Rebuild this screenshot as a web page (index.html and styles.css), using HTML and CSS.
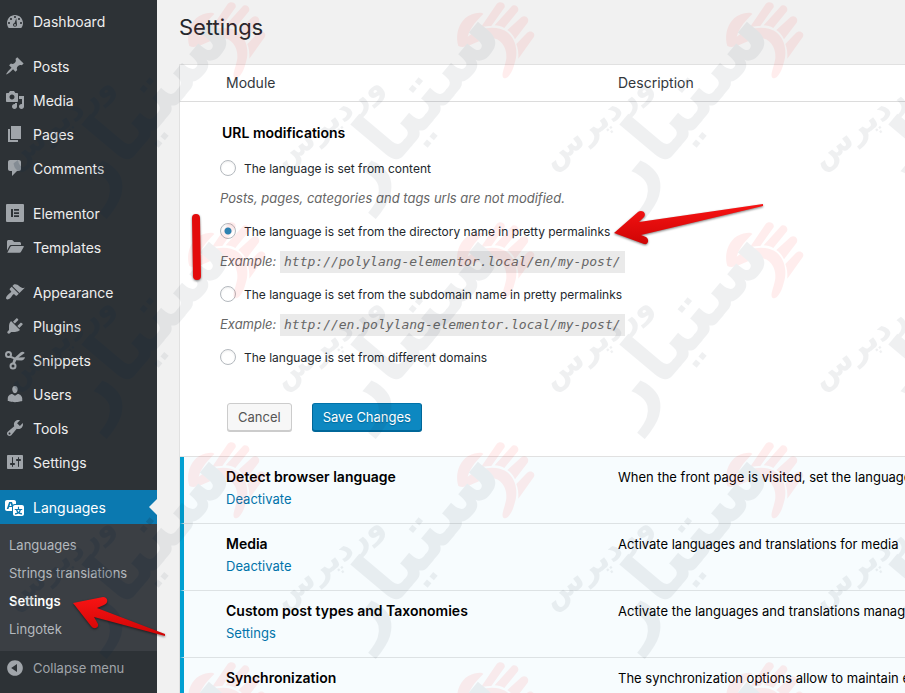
FILE: index.html
```
<!DOCTYPE html>
<html lang="en">
<head>
    <meta charset="UTF-8">
    <title>Settings - Languages</title>
    <meta name="viewport" content="width=device-width, initial-scale=1">
    <link rel="stylesheet" href="styles.css">
</head>
<body>
    <div class="wrapper">
        <nav class="sidebar">
            <ul class="menu">
                <li><a href="#"><svg viewBox="0 0 20 20"><path d="M3.76 17h12.48c1.1-1.37 1.76-3.11 1.76-5 0-4.42-3.58-8-8-8s-8 3.58-8 8c0 1.89.66 3.63 1.76 5zM9 6c0-.55.45-1 1-1s1 .45 1 1c0 .56-.45 1-1 1s-1-.44-1-1zM5 8c0-.55.45-1 1-1s1 .45 1 1c0 .56-.45 1-1 1s-1-.44-1-1zM13 8c0-.55.45-1 1-1s1 .45 1 1c0 .56-.45 1-1 1s-1-.44-1-1zM3 12c0-.55.45-1 1-1s1 .45 1 1c0 .56-.45 1-1 1s-1-.44-1-1zM15 12c0-.55.45-1 1-1s1 .45 1 1c0 .56-.45 1-1 1s-1-.44-1-1zM11.3 7.3L12 13.8c0 1.1-.9 2-2 2s-2-.9-2-2c0-1 .7-1.700 1.500-1.900zM10 13a.9.9 0 1 0 0 1.800.9.9 0 0 0 0-1.800z" fill-rule="evenodd"/></svg>Dashboard</a></li>
                <li class="gap"><a href="#"><svg viewBox="0 0 20 20"><path d="M10.44 3.02l1.82-1.82 6.36 6.35-1.83 1.82c-1.05-.68-2.48-.57-3.41.36l-.75.75c-.92.93-1.04 2.35-.35 3.41l-1.83 1.82-2.41-2.41-2.8 2.79c-.42.42-3.38 2.71-3.8 2.29s1.86-3.39 2.28-3.81l2.79-2.79L4.1 9.36l1.83-1.82c1.05.69 2.48.57 3.4-.36l.75-.75c.93-.92 1.05-2.35.36-3.41z"/></svg>Posts</a></li>
                <li><a href="#"><svg viewBox="0 0 20 20"><path fill-rule="evenodd" d="M13 11V4c0-.55-.45-1-1-1h-1.670L9 1H5L3.670 3H2c-.55 0-1 .45-1 1v7c0 .55.45 1 1 1h10c.55 0 1-.45 1-1zM7 4.500c1.380 0 2.500 1.120 2.500 2.500S8.380 9.500 7 9.500 4.500 8.380 4.500 7 5.620 4.500 7 4.500zM14 6h5v10.500c0 1.380-1.120 2.500-2.500 2.500S14 17.880 14 16.500s1.120-2.500 2.500-2.500c.17 0 .34.02.5.05V9h-3V6zm-4 8.050V13h2v3.500c0 1.380-1.120 2.500-2.500 2.500S7 17.880 7 16.500 8.120 14 9.500 14c.17 0 .34.02.5.05z"/></svg>Media</a></li>
                <li><a href="#"><svg viewBox="0 0 20 20"><path d="M6 15V2h10v13H6zm-1 1h8v2H3V5h2v11z"/></svg>Pages</a></li>
                <li><a href="#"><svg viewBox="0 0 20 20"><path d="M5 2h9c1.1 0 2 .9 2 2v7c0 1.100-.9 2-2 2h-2l-5 5v-5H5c-1.100 0-2-.9-2-2V4c0-1.100.9-2 2-2z"/></svg>Comments</a></li>
                <li class="gap"><a href="#"><svg viewBox="0 0 20 20"><path fill-rule="evenodd" d="M2 1h16a1 1 0 0 1 1 1v16a1 1 0 0 1-1 1H2a1 1 0 0 1-1-1V2a1 1 0 0 1 1-1zM6 6v8h2V6zM9 6v1.700h5V6zM9 9.200v1.700h5V9.200zM9 12.300V14h5v-1.700z"/></svg>Elementor</a></li>
                <li><a href="#"><svg viewBox="0 0 20 20"><path d="M2 13.500V4.500C2 3.700 2.700 3 3.500 3h3.700l2 2h5.300c.8 0 1.500.7 1.500 1.500V8H6.500c-1 0-1.800.5-2.200 1.200zM2.300 15.800l3-5.800c.3-.6.8-1 1.500-1h11.400c.5 0 .8.5.5 1l-2.800 5c-.3.500-.8.8-1.400.8z"/></svg>Templates</a></li>
                <li class="gap"><a href="#"><svg viewBox="0 0 20 20"><path d="M14.480 11.060L7.410 3.990l1.500-1.500c.5-.56 2.300-.47 3.510.32 1.210.8 1.430 1.280 2.910 2.100 1.180.64 2.450 1.260 4.450.85zm-.71.71L6.700 4.700 4.930 6.470c-.39.39-.39 1.020 0 1.410l1.060 1.060c.39.39.39 1.030 0 1.420-.6.6-1.430 1.110-2.210 1.690-.35.26-.7.53-1.010.84C1.430 14.230.4 16.080 1.400 17.070c.99 1 2.840-.03 4.180-1.360.31-.31.58-.66.85-1.020.57-.78 1.080-1.610 1.690-2.210.39-.39 1.020-.39 1.410 0l1.060 1.060c.39.39 1.020.39 1.410 0z"/></svg>Appearance</a></li>
                <li><a href="#"><svg viewBox="0 0 20 20"><path d="M13.110 4.360L9.870 7.600 8 5.730l3.240-3.240c.35-.34 1.050-.2 1.560.32.52.51.66 1.210.31 1.550zm-8 1.770l.91-1.120 9.010 9.010-1.190.84c-.71.71-2.630 1.160-3.820 1.160H6.140L4.900 17.260c-.59.59-1.540.59-2.120 0-.59-.58-.59-1.530 0-2.120l1.240-1.240v-3.880c0-1.130.4-3.190 1.090-3.890zm7.260 3.970l3.240-3.240c.34-.35 1.040-.21 1.550.31.52.51.66 1.210.31 1.550l-3.240 3.250z"/></svg>Plugins</a></li>
                <li><a href="#"><svg viewBox="0 0 20 20"><g fill="none" stroke="currentColor" stroke-width="2"><circle cx="3.500" cy="4.500" r="2.500"/><circle cx="8" cy="16" r="2.500"/></g><path d="M5 5.500l5 2 5.500-5c1.500-1.200 3.300-1 4.200.4l-6.200 4.600 6.500-.2c-.3 2-1.800 3.200-3.700 3.200l-5-.2-1.800 4-2.300-.8 1.300-4.400-4.300-1.700z"/></svg>Snippets</a></li>
                <li><a href="#"><svg viewBox="0 0 20 20"><path d="M10 9.250c-2.270 0-2.730-3.440-2.730-3.440C7 4.020 7.820 2 9.970 2c2.160 0 2.980 2.020 2.710 3.810 0 0-.41 3.440-2.680 3.440zm0 2.570L12.720 10c2.390 0 4.520 2.330 4.520 4.530v2.490s-3.650 1.130-7.240 1.130c-3.650 0-7.240-1.130-7.240-1.130v-2.490c0-2.250 1.940-4.480 4.470-4.480z"/></svg>Users</a></li>
                <li><a href="#"><svg viewBox="0 0 20 20"><path fill-rule="evenodd" d="M16.680 9.770c-1.340 1.340-3.300 1.670-4.950.99l-5.410 6.520c-.99.99-2.590.99-3.580 0s-.99-2.590 0-3.570l6.520-5.420c-.68-1.650-.35-3.610.99-4.950 1.280-1.280 3.120-1.620 4.720-1.060l-2.890 2.890 2.820 2.820 2.860-2.870c.53 1.580.18 3.390-1.080 4.650zM3.810 16.210c.4.39 1.040.39 1.430 0 .4-.4.4-1.040 0-1.430-.39-.4-1.030-.4-1.430 0-.39.39-.39 1.030 0 1.430z"/></svg>Tools</a></li>
                <li><a href="#"><svg viewBox="0 0 20 20"><path fill-rule="evenodd" d="M18 16V4c0-.55-.45-1-1-1H3c-.55 0-1 .45-1 1v12c0 .55.45 1 1 1h14c.55 0 1-.45 1-1zM8 11h1c.55 0 1 .45 1 1s-.45 1-1 1H8v1.500c0 .28-.22.5-.5.5s-.5-.22-.5-.5V13H6c-.55 0-1-.45-1-1s.45-1 1-1h1V5.500c0-.28.22-.5.5-.5s.5.22.5.5V11zm5-2h-1c-.55 0-1-.45-1-1s.45-1 1-1h1V5.500c0-.28.22-.5.5-.5s.5.22.5.5V7h1c.55 0 1 .45 1 1s-.45 1-1 1h-1v5.500c0 .28-.22.5-.5.5s-.5-.22-.5-.5V9z"/></svg>Settings</a></li>
                <li class="gap current"><a href="#"><svg viewBox="0 0 20 20"><path fill-rule="evenodd" d="M11 7H9.490c-.63 0-1.250.3-1.590.7L7 5H4.130l-2.390 7h1.690l.74-2H7v4H2c-1.100 0-2-.9-2-2V5c0-1.100.9-2 2-2h7c1.100 0 2 .9 2 2v2zM6.510 9H4.490l1-2.930zM10 8h7c1.100 0 2 .9 2 2v7c0 1.100-.9 2-2 2h-7c-1.100 0-2-.9-2-2v-7c0-1.100.9-2 2-2zm7.250 5v-1.080h-3.170V9.750h-1.160v2.170H9.750V13h1.280c.11.85.56 1.850 1.280 2.620-.87.36-1.890.62-2.310.62-.01.02.22.97.2 1.460.84 0 2.210-.5 3.280-1.150 1.090.65 2.480 1.150 3.340 1.150-.02-.49.2-1.440.2-1.460-.43 0-1.490-.27-2.380-.63.7-.77 1.140-1.770 1.250-2.610h1.360zm-3.810 1.930c-.5-.46-.85-1.130-1.010-1.930h2.090c-.17.8-.51 1.470-1 1.930l-.04.03s-.03-.02-.04-.03z"/></svg>Languages</a></li>
            </ul>
            <ul class="submenu">
                <li><a href="#">Languages</a></li>
                <li><a href="#">Strings translations</a></li>
                <li><a href="#" class="active">Settings</a></li>
                <li><a href="#">Lingotek</a></li>
            </ul>
            <button type="button" class="collapse"><svg viewBox="0 0 20 20"><path fill-rule="evenodd" d="M10 2.160c4.330 0 7.840 3.510 7.840 7.840s-3.510 7.840-7.840 7.840S2.160 14.330 2.160 10 5.670 2.160 10 2.160zm2 11.720V6.120L6.180 9.970z"/></svg>Collapse menu</button>
        </nav>

        <main class="content">
            <h1>Settings</h1>
            <table class="modules">
                <thead>
                    <tr>
                        <th class="col-module" scope="col">Module</th>
                        <th scope="col">Description</th>
                    </tr>
                </thead>
                <tbody>
                    <tr class="edit-row">
                        <td colspan="2">
                            <form onsubmit="return false;">
                                <h2>URL modifications</h2>
                                <label><input type="radio" name="force_lang" value="0">The language is set from content</label>
                                <p class="note">Posts, pages, categories and tags urls are not modified.</p>
                                <label><input type="radio" name="force_lang" value="1" checked>The language is set from the directory name in pretty permalinks</label>
                                <p class="note">Example: <code>http://polylang-elementor.local/en/my-post/</code></p>
                                <label><input type="radio" name="force_lang" value="2">The language is set from the subdomain name in pretty permalinks</label>
                                <p class="note">Example: <code>http://en.polylang-elementor.local/my-post/</code></p>
                                <label><input type="radio" name="force_lang" value="3">The language is set from different domains</label>
                                <div class="buttons">
                                    <button type="button">Cancel</button>
                                    <button type="submit" class="primary">Save Changes</button>
                                </div>
                            </form>
                        </td>
                    </tr>
                    <tr class="on">
                        <td><strong>Detect browser language</strong><a href="#">Deactivate</a></td>
                        <td>When the front page is visited, set the language according to the browser preference</td>
                    </tr>
                    <tr class="on">
                        <td><strong>Media</strong><a href="#">Deactivate</a></td>
                        <td>Activate languages and translations for media</td>
                    </tr>
                    <tr class="on">
                        <td><strong>Custom post types and Taxonomies</strong><a href="#">Settings</a></td>
                        <td>Activate the languages and translations management for custom post types and taxonomies</td>
                    </tr>
                    <tr class="on">
                        <td><strong>Synchronization</strong></td>
                        <td>The synchronization options allow to maintain exact same values between translations</td>
                    </tr>
                </tbody>
            </table>
        </main>

        <!-- Repeating brand mark over the whole screen -->
        <svg class="overlay" aria-hidden="true">
            <defs>
                <pattern id="mark" x="2" y="2" width="269" height="220" patternUnits="userSpaceOnUse">
                    <g class="mark-hand" transform="translate(129 -2) scale(.3333)">
                        <path d="M175 138C164 100 180 62 205 48C225 38 246 36 250 42C232 60 212 80 203 110C232 86 270 78 300 86C345 98 358 150 344 190C335 225 320 240 310 233C302 224 316 200 319 175C322 140 300 112 270 114C235 118 200 150 175 138Z"/>
                        <path d="M241 84L290 12C298 2 318 8 314 22L274 78C262 77 250 79 241 84Z"/>
                        <path d="M284 76L334 20C344 8 360 22 354 34L313 84C304 79 294 77 284 76Z"/>
                        <path d="M322 90L364 52C376 42 390 56 383 68L345 118C340 106 332 96 322 90Z"/>
                        <path d="M349 132L380 100C390 88 408 98 402 110L355 176C356 160 354 144 349 132Z"/>
                    </g>
                    <text class="mark-big" transform="translate(92 202) rotate(-50)">ستیار</text>
                    <text class="mark-small" transform="translate(12 168) rotate(-38)">وردپرس</text>
                </pattern>
            </defs>
            <rect class="mark-light" x="157" width="100%" height="100%" fill="url(#mark)"/>
            <rect class="mark-dark" width="157" height="100%" fill="url(#mark)"/>
        </svg>

        <!-- Callouts -->
        <svg class="overlay callouts" aria-hidden="true">
            <defs>
                <linearGradient id="red" x1="0" y1="0" x2="0" y2="1">
                    <stop offset="0" stop-color="#f81414"/>
                    <stop offset="1" stop-color="#cf0505"/>
                </linearGradient>
            </defs>
            <path d="M614 233L638 212C642 209 647 213 644 217L639 222L763 204V206L641 235L646 237C650 240 648 245 644 244Z" fill="url(#red)"/>
            <path d="M73 603L103 597C108 597 109 603 104 605L97 608L165 634V636L94 617L98 624C99 628 94 630 91 626Z" fill="url(#red)"/>
            <path class="bar" d="M196 218L197 276"/>
        </svg>
    </div>
</body>
</html>
```
FILE: styles.css
```
* {
    box-sizing: border-box;
}
body {
    background: #f1f1f1;
    color: #23282d;
    font-family: Inter, sans-serif;
    font-size: 12px;
    margin: 0;
}
ul, h1, h2, p {
    margin: 0;
    padding: 0;
    list-style: none;
}
a {
    text-decoration: none;
}
.wrapper {
    position: relative;
    display: flex;
    height: 100vh;
    overflow: hidden;
}

/* Sidebar */
.sidebar {
    flex: 0 0 157px;
    background: #2d3236;
    padding-top: 4px;
}
.menu a,
.collapse {
    display: flex;
    align-items: center;
    gap: 8px;
    width: 100%;
    height: 34px;
    padding: 0 5px;
    color: #eee;
    font-size: 14px;
}
.menu svg,
.collapse svg {
    width: 20px;
    height: 20px;
    fill: currentColor;
    color: #a0a5aa;
}
.menu .gap {
    margin-top: 11px;
}
.menu .current {
    position: relative;
    background: #0b79b0;
}
.menu .current a,
.menu .current svg {
    color: #fff;
}
.menu .current:after {
    content: "";
    position: absolute;
    right: 0;
    top: 9px;
    border: 8px solid transparent;
    border-left: 0;
    border-right-color: #f1f1f1;
}
.submenu {
    background: #3b3f44;
    padding: 7px 9px 8px;
}
.submenu a {
    display: block;
    color: #b4b9be;
    font-size: 13px;
    line-height: 28px;
}
.submenu .active {
    color: #fff;
    font-weight: 600;
}
.collapse {
    border: none;
    background: none;
    color: #a0a5aa;
    font-family: inherit;
    font-size: 13px;
    cursor: pointer;
}

/* Content */
.content {
    flex: 1;
    min-width: 0;
    padding: 12px 0 0 22px;
}
h1 {
    color: #23282d;
    font-size: 22px;
    font-weight: 400;
    line-height: 30px;
    margin-bottom: 22px;
}
.modules {
    width: 100%;
    table-layout: fixed;
    border-collapse: separate;
    border-spacing: 0;
    background: #fff;
    border: 1px solid #e1e1e1;
    border-right: none;
}
.modules th {
    height: 37px;
    padding: 0 0 2px;
    border-bottom: 1px solid #dcdcdc;
    color: #32373c;
    font-size: 14px;
    font-weight: 400;
    text-align: left;
}
.modules .col-module {
    width: 438px;
    padding-left: 46px;
}
.edit-row td {
    padding: 20px 0 25px 40px;
    border-bottom: 1px solid #e1e1e1;
}
.edit-row h2 {
    color: #000;
    font-size: 14px;
    font-weight: 600;
    line-height: 22px;
    margin-bottom: 9px;
    padding-left: 2px;
}
.edit-row label {
    display: flex;
    align-items: center;
    gap: 8px;
    height: 30px;
}
.edit-row input {
    appearance: none;
    width: 16px;
    height: 16px;
    margin: 0;
    border: 1px solid #b4b9be;
    border-radius: 50%;
    background: #fff;
    box-shadow: inset 0 1px 2px rgba(0,0,0,0.07);
}
.edit-row input:checked {
    background: radial-gradient(#1e8cbe 3px, #fff 4px);
}
.note {
    color: #666;
    font-size: 13px;
    font-style: italic;
    line-height: 30px;
    height: 33px;
}
.note code {
    background: #eaeaea;
    font-family: "DejaVu Sans Mono", monospace;
    font-size: 13px;
    padding: 3px 4px 4px;
}
.buttons {
    display: flex;
    gap: 20px;
    margin-top: 31px;
    padding-left: 7px;
}
.buttons button {
    height: 28px;
    padding: 0 10px;
    border: 1px solid #ccc;
    border-radius: 3px;
    background: #f7f7f7;
    box-shadow: 0 1px 0 #ccc;
    color: #555;
    font-family: inherit;
    font-size: 13px;
    cursor: pointer;
}
.buttons .primary {
    background: #0d88c1;
    border-color: #0073aa #006799 #006799;
    box-shadow: 0 1px 0 #006799;
    color: #fff;
    text-shadow: 0 1px 1px #006799;
}
.on td {
    height: 67px;
    padding: 9px 0 0;
    background: #f7fcfe;
    border-bottom: 1px solid #dde2e4;
    color: #000;
    font-size: 13px;
    line-height: 22px;
    vertical-align: top;
    white-space: nowrap;
    overflow: hidden;
}
.on td:first-child {
    border-left: 4px solid #00a0d2;
    padding-left: 42px;
}
.on strong {
    display: block;
    font-size: 14px;
    font-weight: 600;
}
.on a {
    color: #0073aa;
}

/* Overlays */
.overlay {
    position: absolute;
    top: 0;
    left: 0;
    width: 100%;
    height: 100%;
    pointer-events: none;
}
.mark-light {
    opacity: 0.07;
}
.mark-dark {
    opacity: 0.2;
}
.mark-hand {
    fill: #f00;
}
.mark-big,
.mark-small {
    fill: #14283c;
    font-family: "DejaVu Sans", sans-serif;
    font-size: 80px;
    font-weight: 700;
}
.mark-small {
    font-size: 32px;
}
.callouts {
    filter: drop-shadow(0 1px 1px rgba(0,0,0,0.5));
}
.callouts .bar {
    stroke: #e30b0b;
    stroke-width: 8px;
    stroke-linecap: round;
}
```
